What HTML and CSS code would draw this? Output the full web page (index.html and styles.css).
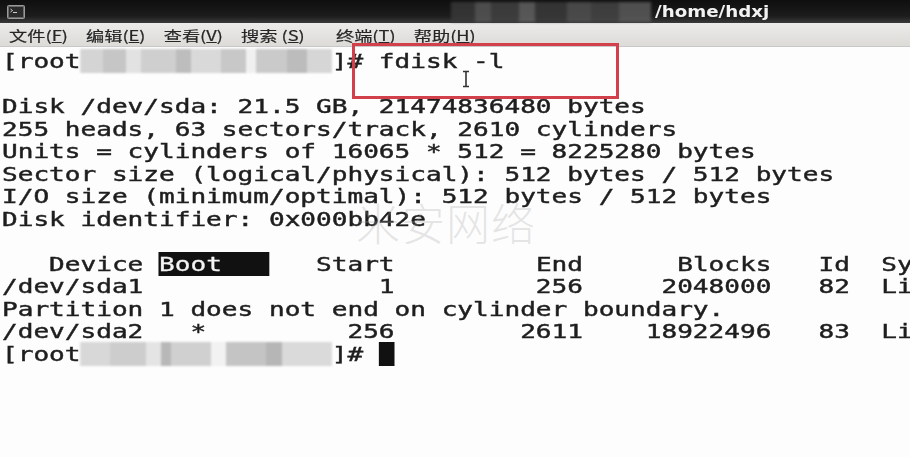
FILE: index.html
```html
<!DOCTYPE html>
<html lang="zh-CN">
<head>
    <meta charset="UTF-8">
    <meta name="viewport" content="width=device-width, initial-scale=1.0">
    <title>root@localhost:/home/hdxj</title>
    <link rel="stylesheet" href="styles.css">
</head>
<body>
    <div class="window">
        <div class="titlebar">
            <svg class="app-icon" width="18" height="14" viewBox="0 0 18 14">
                <rect x="0.5" y="0.5" width="17" height="13" rx="1" fill="#6a6a6a" stroke="#9a9a9a"/>
                <rect x="2" y="2" width="14" height="10" fill="#2b2b2b"/>
                <path d="M3.5 4 L5.5 5.5 L3.5 7" stroke="#ccc" stroke-width="1" fill="none"/>
                <rect x="6" y="7" width="4" height="1" fill="#ccc"/>
            </svg>
            <div class="title">
                <span class="title-mask"></span>
                <span class="title-text">/home/hdxj</span>
            </div>
        </div>

        <div class="menubar">
            <div class="menu">
                <span class="menu-item">文件(<u>F</u>)</span>
                <span class="menu-item">编辑(<u>E</u>)</span>
                <span class="menu-item">查看(<u>V</u>)</span>
                <span class="menu-item wide">搜索 (<u>S</u>)</span>
                <span class="menu-item">终端(<u>T</u>)</span>
                <span class="menu-item">帮助(<u>H</u>)</span>
            </div>
        </div>

        <div class="terminal">
<pre class="screen">[root<span class="mask">                </span>]# fdisk -l

Disk /dev/sda: 21.5 GB, 21474836480 bytes
255 heads, 63 sectors/track, 2610 cylinders
Units = cylinders of 16065 * 512 = 8225280 bytes
Sector size (logical/physical): 512 bytes / 512 bytes
I/O size (minimum/optimal): 512 bytes / 512 bytes
Disk identifier: 0x000bb42e

   Device <span class="sel">Boot   </span>   Start         End      Blocks   Id  System
/dev/sda1               1         256     2048000   82  Linux swap / Solaris
Partition 1 does not end on cylinder boundary.
/dev/sda2   *         256        2611    18922496   83  Linux
[root<span class="mask mask-b">                </span>]# <span class="cursor"> </span></pre>

            <div class="highlight-box"></div>
            <svg class="ibeam" width="10" height="18" viewBox="0 0 10 18">
                <path d="M2 1.5 H8 M5 1.5 V16.5 M2 16.5 H8" stroke="#333" stroke-width="1.6" fill="none"/>
            </svg>
            <div class="watermark">米安网络</div>
        </div>
    </div>
</body>
</html>
```

FILE: styles.css
```css
html, body {
    margin: 0;
    padding: 0;
    background: #fdfdfd;
    overflow: hidden;
}
.window {
    width: 910px;
    height: 457px;
    display: flex;
    flex-direction: column;
    overflow: hidden;
}
.titlebar {
    height: 23px;
    display: flex;
    align-items: center;
    background: linear-gradient(#0f0f0f, #1c1c1c 70%, #3a3a3a);
    padding-left: 7px;
}
.app-icon {
    flex: none;
}
.title {
    display: flex;
    align-items: center;
    margin-left: 426px;
    height: 23px;
}
.title-mask {
    width: 200px;
    height: 20px;
    background: linear-gradient(90deg, #3a3a3a 0 12%, #5a5a5a 12% 20%, #444 20% 34%, #666 34% 42%, #3c3c3c 42% 58%, #555 58% 70%, #484848 70% 84%, #5e5e5e 84% 100%);
    filter: blur(1.5px);
    opacity: 0.8;
}
.title-text {
    margin-left: 4px;
    color: #f2f2f2;
    font-family: "DejaVu Sans", sans-serif;
    font-weight: bold;
    font-size: 16px;
    transform: scaleX(1.14);
    transform-origin: 0 50%;
}
.menubar {
    height: 23px;
    background: linear-gradient(#ecebe9, #dcdbd8);
    border-bottom: 1px solid #c8c8c8;
    display: flex;
    align-items: center;
}
.menu {
    display: flex;
    gap: 14px;
    padding-left: 7px;
    transform: scaleX(1.3);
    transform-origin: 0 50%;
    font-family: "Noto Sans CJK SC", sans-serif;
    font-size: 14px;
    color: #262626;
    -webkit-text-stroke: 0.2px #262626;
}
.menu-item.wide {
    margin-right: 10px;
}
.terminal {
    position: relative;
    flex: 1;
    background: #fdfdfd;
    padding: 3px 0 0 2px;
}
.screen {
    margin: 0;
    font-family: "DejaVu Sans Mono", monospace;
    font-size: 20px;
    line-height: 22.5px;
    color: #1e1e1e;
    -webkit-text-stroke: 0.45px #1e1e1e;
    transform: scaleX(1.304);
    transform-origin: 0 0;
    white-space: pre;
}
.mask {
    background: linear-gradient(90deg, #d4d4d4 0 9%, #c6c6c6 9% 18%, #e2e2e2 18% 24%, #cfcfcf 24% 38%, #bdbdbd 38% 44%, #d9d9d9 44% 56%, #c8c8c8 56% 66%, #f0f0f0 66% 70%, #cacaca 70% 82%, #bcbcbc 82% 90%, #d6d6d6 90% 100%);
    filter: blur(1px);
}
.mask-b {
    background: linear-gradient(90deg, #d8d8d8 0 12%, #cdcdcd 12% 26%, #e4e4e4 26% 32%, #b8b8b8 32% 36%, #d0d0d0 36% 52%, #f2f2f2 52% 58%, #c4c4c4 58% 74%, #b6b6b6 74% 80%, #dadada 80% 100%);
}
.sel {
    background: #111;
    color: #f4f4f4;
    -webkit-text-stroke: 0.3px #f4f4f4;
}
.cursor {
    background: #111;
}
.highlight-box {
    position: absolute;
    left: 352px;
    top: -4px;
    width: 261px;
    height: 50px;
    border: 3px solid #d2414b;
}
.ibeam {
    position: absolute;
    left: 461px;
    top: 23px;
}
.watermark {
    position: absolute;
    left: 356px;
    top: 143px;
    font-family: "Noto Sans CJK SC", sans-serif;
    font-weight: 300;
    font-size: 44px;
    letter-spacing: 1px;
    color: rgba(160, 160, 160, 0.26);
}
```
